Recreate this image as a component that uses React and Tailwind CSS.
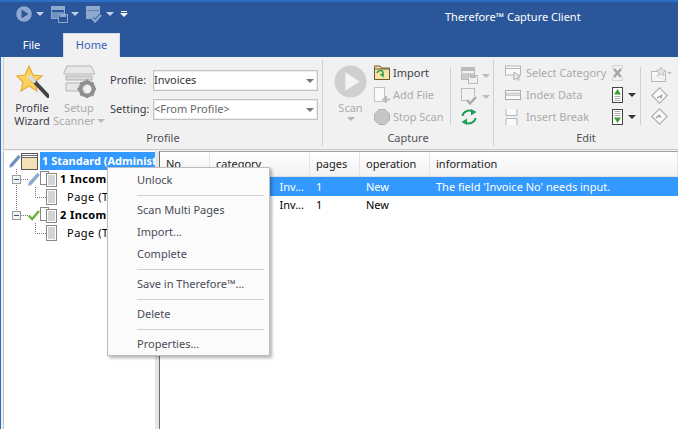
import React from "react";

const Caret = ({ className = "border-t-[#9a9a9a]" }) => (
  <span className={`inline-block w-0 h-0 border-l-[4px] border-r-[4px] border-t-[4px] border-l-transparent border-r-transparent ${className}`} />
);

const PlayCircle = ({ size = 16, fill = "#8fa8d0", tri = "#2b579a" }) => (
  <svg width={size} height={size} viewBox="0 0 32 32">
    <circle cx="16" cy="16" r="15.5" fill={fill} />
    <path d="M11 7 L25 16 L11 25 Z" fill={tri} />
  </svg>
);

const DocSave = ({ c = "#8fa8d0", bg = "#2b579a" }) => (
  <svg width="17" height="17" viewBox="0 0 17 17">
    <rect x="0.5" y="0.5" width="13" height="12" fill="none" stroke={c} />
    <rect x="1" y="1" width="12" height="3" fill={c} />
    <rect x="1" y="6" width="12" height="6" fill={c} opacity="0.7" />
    <rect x="7.5" y="8.5" width="9" height="8" fill={bg} stroke={c} />
    <rect x="9" y="9" width="6" height="2" fill={c} />
  </svg>
);

const DocCheck = ({ c = "#8fa8d0", check = "#8fa8d0", filled = true, bg = "#2b579a" }) => (
  <svg width="17" height="17" viewBox="0 0 17 17">
    <rect x="0.5" y="0.5" width="13" height="12" fill={filled ? c : "none"} stroke={c} />
    <path d="M1 4.5 H13" stroke={bg} opacity="0.5" />
    <path d="M6 12 L9 15.5 L15 9" fill="none" stroke={bg} strokeWidth="4" />
    <path d="M6 12 L9 15.5 L15 9" fill="none" stroke={check} strokeWidth="2.2" />
  </svg>
);

const Wizard = () => (
  <svg width="33" height="33" viewBox="0 0 33 33">
    <path d="M13 1 L17 10 L26 11 L19 17 L21 26 L13 21 L5 26 L7 17 L0.8 11 L9 10 Z" fill="#fbd35c" stroke="#e5a93a" strokeWidth="1.2" />
    <path d="M15 13 L32 31" stroke="#444" strokeWidth="4" strokeLinecap="round" />
    <path d="M14 12 L18 16" stroke="#ddd" strokeWidth="4" strokeLinecap="round" />
  </svg>
);

const ScannerGear = () => (
  <svg width="33" height="33" viewBox="0 0 33 33">
    <path d="M4 1 H28 L32 9 H0.5 Z" fill="#e8e8e8" stroke="#b5b5b5" />
    <rect x="3" y="11" width="26" height="4" fill="#d8d8d8" stroke="#b5b5b5" />
    <path d="M3 18 H22 V26 H3 Z" fill="#e6e6e6" stroke="#b5b5b5" />
    <circle cx="24" cy="24" r="6.5" fill="none" stroke="#8f8f8f" strokeWidth="4" />
    <path d="M24 14.5 V18 M24 30 V33 M14.5 24 H18 M30 24 H33 M17.5 17.5 L20 20 M28 28 L30.5 30.5 M30.5 17.5 L28 20 M20 28 L17.5 30.5" stroke="#8f8f8f" strokeWidth="2.5" />
    <circle cx="24" cy="24" r="3" fill="#f1f1f1" />
  </svg>
);

const ImportIcon = () => (
  <svg width="16" height="16" viewBox="0 0 16 16">
    <path d="M0.5 1 H6 L7.5 3 H15.5 V14.5 H0.5 Z" fill="#f5e3a8" stroke="#6b5a2a" />
    <path d="M1 4 H15" stroke="#6b5a2a" />
    <path d="M3 8 C4 5 8 5 9 7 M9 7 V11 L6.5 9" fill="none" stroke="#1e9a4a" strokeWidth="1.5" />
  </svg>
);

const AddFileIcon = () => (
  <svg width="16" height="16" viewBox="0 0 16 16">
    <rect x="0.5" y="0.5" width="10" height="14" fill="#fafafa" stroke="#c4c4c4" />
    <path d="M12 9 V16 M8 12.5 H16" stroke="#bdbdbd" strokeWidth="2" />
  </svg>
);

const StopIcon = () => (
  <svg width="16" height="16" viewBox="0 0 16 16">
    <path d="M5 0.5 H11 L15.5 5 V11 L11 15.5 H5 L0.5 11 V5 Z" fill="#c6c6c6" stroke="#b0b0b0" />
  </svg>
);

const RefreshIcon = () => (
  <svg width="16" height="16" viewBox="0 0 16 16" fill="none">
    <path d="M1.5 7 C2 3 7 0 11.5 2.5" stroke="#1f9d55" strokeWidth="2" />
    <path d="M10 0 L15.5 3 L10 6.5 Z" fill="#1f9d55" />
    <path d="M14.5 9 C14 13 9 16 4.5 13.5" stroke="#1f9d55" strokeWidth="2" />
    <path d="M6 16 L0.5 13 L6 9.5 Z" fill="#1f9d55" />
  </svg>
);

const SelectCatIcon = () => (
  <svg width="17" height="16" viewBox="0 0 17 16" fill="none">
    <rect x="0.5" y="1" width="15" height="9" stroke="#b5b5b5" fill="#fafafa" />
    <path d="M1 3.5 H15" stroke="#b5b5b5" />
    <path d="M9 7 L9 15 L11 13 L13 15.5 L14 14.5 L12.5 12.5 L15 12 Z" fill="#f1f1f1" stroke="#aaa" />
  </svg>
);

const IndexDataIcon = () => (
  <svg width="17" height="12" viewBox="0 0 17 12" fill="none">
    <rect x="0.5" y="1.5" width="15" height="9" stroke="#aaa" fill="#fafafa" />
    <rect x="1" y="4" width="14" height="2.5" fill="#e0e0e0" stroke="#b5b5b5" strokeWidth="0.6" />
  </svg>
);

const InsertBreakIcon = () => (
  <svg width="13" height="16" viewBox="0 0 13 16" fill="none">
    <path d="M1 0 V6.5 H12 V0 M1 16 V9.5 H12 V16" stroke="#b5b5b5" fill="#fafafa" />
  </svg>
);

const CrossIcon = () => (
  <svg width="11" height="16" viewBox="0 0 11 16" fill="none">
    <path d="M0.5 4 V0.5 H10.5 V4 M0.5 12 V15.5 H10.5 V12" stroke="#d4d4d4" />
    <path d="M2 4 L9 12 M9 4 L2 12" stroke="#a6a6a6" strokeWidth="2.6" />
  </svg>
);

const MoveIcon = ({ up }) => (
  <svg width="11" height="16" viewBox="0 0 11 16">
    <rect x="0.5" y="0.5" width="10" height="15" fill="#fff" stroke="#444" />
    {up ? (
      <>
        <path d="M5.5 2 L9 7.5 H2 Z" fill="#3aa12f" />
        <path d="M2.5 9.5 H8.5 M2.5 11.5 H8.5 M2.5 13.5 H8.5" stroke="#999" strokeWidth="0.8" />
      </>
    ) : (
      <>
        <path d="M2.5 2.5 H8.5 M2.5 4.5 H8.5 M2.5 6.5 H8.5" stroke="#999" strokeWidth="0.8" />
        <path d="M5.5 14 L9 8.5 H2 Z" fill="#3aa12f" />
      </>
    )}
  </svg>
);

const StarDoc = () => (
  <svg width="21" height="16" viewBox="0 0 21 16" fill="none">
    <rect x="0.5" y="4.5" width="14" height="10" stroke="#b8b8b8" fill="#f8f8f8" />
    <path d="M2 13 L6 9 L9 12 L11 10 L14 13" stroke="#ddd" />
    <path d="M10 0 L11.5 3 L15 3.3 L12.4 5.5 L13.2 9 L10 7 L6.8 9 L7.6 5.5 L5 3.3 L8.5 3 Z" fill="#e4e4e4" stroke="#c4c4c4" />
    <path d="M16 5 H21 L18.5 7.5 Z" fill="#c0c0c0" />
  </svg>
);

const Diamond = ({ flip }) => (
  <svg width="17" height="17" viewBox="0 0 17 17" fill="none">
    <g transform={flip ? "translate(0 17) scale(1 -1)" : undefined}>
      <path d="M8.5 0.8 L16.2 8.5 L8.5 16.2 L0.8 8.5 Z" stroke="#b0b0b0" strokeWidth="1.2" fill="#fafafa" />
    </g>
    <path d={flip ? "M5 10 L8 7.5 L10 9.5" : "M6 11 L10.5 8.5 L10 11.5"} stroke="#999" strokeWidth="1.3" />
  </svg>
);

const Combo = ({ children, muted }) => (
  <div className="w-[165px] h-[21px] bg-white border border-[#c4c4c4] shadow-[inset_0_0_0_1px_#ececec] flex items-center justify-between pr-[3px]">
    <span className={muted ? "text-[#666]" : "text-[#333]"}>{children}</span>
    <Caret className="border-t-[#777]" />
  </div>
);

const RowBtn = ({ icon, label, active, iconW = "w-[19px]" }) => (
  <div className="h-[22px] flex items-center">
    <div className={`${iconW} flex justify-start items-center`}>{icon}</div>
    <span className={active ? "text-[#3c3c46]" : "text-[#ababab]"}>{label}</span>
  </div>
);

const Pencil = ({ c = "#6f8fbd" }) => (
  <svg width="12" height="14" viewBox="0 0 12 14">
    <path d="M9.5 1 L11.5 3 L3.5 12.5 L0.5 13.5 L1 10.5 Z" fill={c} stroke="#8fa4c4" strokeWidth="0.5" />
  </svg>
);

const Check = () => (
  <svg width="12" height="12" viewBox="0 0 12 12" fill="none">
    <path d="M0.8 6.5 L4.2 10 L11 2" stroke="#6ab23a" strokeWidth="2.4" />
  </svg>
);

const Stack = () => (
  <svg width="17" height="16" viewBox="0 0 17 16">
    <rect x="0.5" y="0.5" width="8" height="13" fill="#fff" stroke="#888" />
    <rect x="6.5" y="2.5" width="10" height="13" fill="#fff" stroke="#888" />
    <path d="M8 5 H15 M8 7 H15 M8 9 H15 M8 11 H15 M8 13 H15" stroke="#aaa" />
  </svg>
);

const Page = () => (
  <svg width="11" height="16" viewBox="0 0 11 16">
    <rect x="0.5" y="0.5" width="10" height="15" fill="#fff" stroke="#888" />
    <path d="M2 3 H9 M2 5 H9 M2 7 H9 M2 9 H9 M2 11 H9 M2 13 H9" stroke="#aaa" />
  </svg>
);

const Folder = () => (
  <svg width="17" height="17" viewBox="0 0 17 17">
    <rect x="0.5" y="0.5" width="16" height="16" fill="#f3e0b5" stroke="#555" />
    <path d="M1 2.5 H16 M1 4.5 H16" stroke="#666" />
    <rect x="1" y="1" width="15" height="1" fill="#fff" />
    <rect x="1" y="3" width="15" height="1" fill="#fff" />
  </svg>
);

const Minus = () => (
  <span className="w-[9px] h-[9px] border border-[#999] bg-[#f4f4f4] flex items-center justify-center shrink-0">
    <span className="w-[5px] h-px bg-[#2b579a]" />
  </span>
);

// dotted lines of the tree, over the rows
const TreeLines = () => (
  <svg className="absolute left-0 top-0" width="60" height="100" fill="none" stroke="#777" strokeDasharray="1 1">
    <path d="M12.5 18 V65" />
    <path d="M17 28.5 H24" />
    <path d="M17 64.5 H24" />
    <path d="M31.5 36 V46.5 H42" />
    <path d="M31.5 72 V82.5 H42" />
  </svg>
);

const MenuItem = ({ children }) => (
  <div className="h-[22px] flex items-center pl-[29px] text-[#4a4a58]">{children}</div>
);
const MenuSep = () => (
  <div className="h-[8px] flex items-center pl-[29px] pr-[5px]">
    <div className="h-px w-full bg-[#d0d0d0]" />
  </div>
);

const GroupLabel = ({ children }) => (
  <div className="text-center text-[#55505a] h-[16px] leading-[16px] shrink-0">{children}</div>
);

const Columns = [
  ["No", "w-[50px]"],
  ["category", "w-[100px]"],
  ["pages", "w-[50px]"],
  ["operation", "w-[70px]"],
  ["information", "flex-1"],
];

export default function App() {
  return (
    <div className="w-[678px] h-[429px] overflow-hidden relative bg-white flex flex-col text-[11px] font-['Noto_Sans',sans-serif]">
      {/* title bar */}
      <div className="h-[57px] shrink-0 bg-[#2b579a] border-t-2 border-[#2b6fc4] flex flex-col">
        <div className="h-[31px] flex items-start">
          <div className="w-[445px] shrink-0 flex items-center pl-[16px] h-[24px]">
            <PlayCircle />
            <span className="ml-[4px] mr-[7px] flex"><Caret className="border-t-[#c5d2e6]" /></span>
            <DocSave />
            <span className="ml-[3px] mr-[7px] flex"><Caret className="border-t-[#c5d2e6]" /></span>
            <DocCheck />
            <span className="ml-[3px] mr-[6px] flex"><Caret className="border-t-[#c5d2e6]" /></span>
            <span className="flex flex-col items-center gap-[1px]">
              <span className="w-[6px] h-px bg-white" />
              <Caret className="border-t-white" />
            </span>
          </div>
          <div className="mt-[8px] text-white leading-[14px]">Therefore™ Capture Client</div>
        </div>
        <div className="flex h-[24px] items-stretch">
          <div className="w-[63px] flex items-center justify-center text-white">File</div>
          <div className="w-[57px] bg-[#f1f1f1] border border-b-0 border-[#d4dbe8] flex items-center justify-center text-[#3a5fbe]">Home</div>
        </div>
      </div>

      <div className="flex-1 min-h-0 flex flex-col bg-[#f0f0f0] border-l border-[#2b6fc4] pl-[2px]">
        {/* ribbon */}
        <div className="h-[93px] shrink-0 bg-[#f1f1f1] border-l border-[#cfcfcf] border-b border-b-[#c8c8c8] flex overflow-hidden">
          <div className="w-[319px] shrink-0 flex flex-col border-r border-[#d0d0d0] mt-[3px] mb-[3px]">
            <div className="flex-1 min-h-0 flex">
              <div className="w-[38px] ml-[9px] flex flex-col items-center pt-[5px] text-[#3c3c46] leading-[13px]">
                <Wizard />
                <span className="mt-[3px]">Profile</span>
                <span>Wizard</span>
              </div>
              <div className="w-[50px] ml-[3px] flex flex-col items-center pt-[5px] text-[#ababab] leading-[13px]">
                <ScannerGear />
                <span className="mt-[3px]">Setup</span>
                <span className="flex items-center gap-[2px]">Scanner <Caret className="border-t-[#bbb]" /></span>
              </div>
              <div className="ml-[6px] pt-[10px] flex flex-col gap-[8px] text-[#3c3c46]">
                <div className="flex items-center">
                  <span className="w-[43px]">Profile:</span>
                  <Combo>Invoices</Combo>
                </div>
                <div className="flex items-center">
                  <span className="w-[43px]">Setting:</span>
                  <Combo muted>&lt;From Profile&gt;</Combo>
                </div>
              </div>
            </div>
            <GroupLabel>Profile</GroupLabel>
          </div>

          <div className="w-[171px] shrink-0 flex flex-col border-r border-[#d0d0d0] mt-[3px] mb-[3px]">
            <div className="flex-1 min-h-0 flex">
              <div className="w-[51px] flex flex-col items-center pt-[5px] pl-[4px] text-[#ababab] leading-[13px]">
                <PlayCircle size={33} fill="#cfcfcf" tri="#f4f4f4" />
                <span className="mt-[3px]">Scan</span>
                <span className="mt-[3px] flex"><Caret className="border-t-[#b5b5b5]" /></span>
              </div>
              <div className="w-[76px] pt-[2px]">
                <RowBtn active icon={<ImportIcon />} label="Import" />
                <RowBtn icon={<AddFileIcon />} label="Add File" />
                <RowBtn icon={<StopIcon />} label="Stop Scan" />
              </div>
              <div className="w-[43px] mt-[7px] h-[58px] border-l border-[#d0d0d0] pl-[10px] flex flex-col justify-between">
                <div className="flex items-center gap-[4px]"><DocSave c="#bbb" bg="#f1f1f1" /><Caret className="border-t-[#bbb]" /></div>
                <div className="flex items-center gap-[4px]"><DocCheck c="#bbb" check="#a8a8a8" filled={false} bg="#f1f1f1" /><Caret className="border-t-[#bbb]" /></div>
                <RefreshIcon />
              </div>
            </div>
            <GroupLabel>Capture</GroupLabel>
          </div>

          <div className="flex-1 flex flex-col mt-[3px] mb-[3px]">
            <div className="flex-1 min-h-0 flex pl-[11px]">
              <div className="w-[107px] pt-[2px]">
                <RowBtn iconW="w-[21px]" icon={<SelectCatIcon />} label="Select Category" />
                <RowBtn iconW="w-[21px]" icon={<IndexDataIcon />} label="Index Data" />
                <RowBtn iconW="w-[21px]" icon={<InsertBreakIcon />} label="Insert Break" />
              </div>
              <div className="w-[28px] pt-[2px]">
                <div className="h-[22px] flex items-center"><CrossIcon /></div>
                <div className="h-[22px] flex items-center gap-[5px]"><MoveIcon up /><Caret className="border-t-[#333]" /></div>
                <div className="h-[22px] flex items-center gap-[5px]"><MoveIcon /><Caret className="border-t-[#333]" /></div>
              </div>
              <div className="mt-[7px] h-[58px] border-l border-[#d0d0d0] pl-[10px] flex flex-col justify-between">
                <StarDoc />
                <Diamond />
                <Diamond flip />
              </div>
            </div>
            <GroupLabel>Edit</GroupLabel>
          </div>
        </div>

        {/* panes */}
        <div className="flex-1 flex min-h-0 pt-[1px]">
          <div className="w-[152px] bg-white text-black shrink-0 overflow-hidden pt-[1px] border-l border-[#c4c4c4] relative">
            <TreeLines />
            <div className="h-[18px] flex items-center pl-[5px] whitespace-nowrap relative">
              <Pencil />
              <Folder />
              <span className="ml-[2px] flex-1 h-[18px] leading-[18px] bg-[#3399ff] text-white font-bold overflow-hidden pl-[2px]">1 Standard (Administrator)</span>
            </div>
            <div className="h-[18px] flex items-center pl-[8px] whitespace-nowrap relative">
              <Minus />
              <span className="w-[7px]" />
              <Pencil c="#8fa8d0" />
              <Stack />
              <span className="ml-[3px] font-bold tracking-[0.4px]">1 Incoming</span>
            </div>
            <div className="h-[18px] flex items-center pl-[42px] whitespace-nowrap relative">
              <Page />
              <span className="ml-[10px] tracking-[0.5px]">Page (TIFF)</span>
            </div>
            <div className="h-[18px] flex items-center pl-[8px] whitespace-nowrap relative">
              <Minus />
              <span className="w-[7px]" />
              <Check />
              <Stack />
              <span className="ml-[3px] font-bold tracking-[0.4px]">2 Incoming</span>
            </div>
            <div className="h-[18px] flex items-center pl-[42px] whitespace-nowrap relative">
              <Page />
              <span className="ml-[10px] tracking-[0.5px]">Page (TIFF)</span>
            </div>
          </div>
          <div className="w-[4px] shrink-0 bg-[#e6e6e6]" />
          <div className="flex-1 bg-white text-black min-w-0 border-l border-l-[#6e6e6e] border-t border-t-[#a0a0a0]">
            <div className="h-[25px] flex bg-gradient-to-b from-white to-[#f2f2f2] border-b border-[#e0e0e0]">
              {Columns.map(([name, w]) => (
                <div key={name} className={`${w} border-r border-[#e4e4e4] pl-[6px] pt-px flex items-center text-[#222]`}>{name}</div>
              ))}
            </div>
            <div className="h-[19px] flex bg-[#3399ff] text-white items-center pt-px">
              <div className="w-[50px]" />
              <div className="w-[100px] text-right pr-[6px]">Inv...</div>
              <div className="w-[50px] pl-[6px]">1</div>
              <div className="w-[70px] pl-[6px]">New</div>
              <div className="flex-1 pl-[6px]">The field 'Invoice No' needs input.</div>
            </div>
            <div className="h-[19px] flex items-center">
              <div className="w-[50px]" />
              <div className="w-[100px] text-right pr-[6px]">Inv...</div>
              <div className="w-[50px] pl-[6px]">1</div>
              <div className="w-[70px] pl-[6px]">New</div>
            </div>
          </div>
        </div>
      </div>

      {/* context menu */}
      <div className="absolute left-[107px] top-[167px] w-[163px] h-[189px] bg-[#fbfbfb] border border-[#bdbdbd] shadow-[2px_2px_3px_rgba(0,0,0,0.3)] pt-px z-10">
        <MenuItem>Unlock</MenuItem>
        <MenuSep />
        <MenuItem>Scan Multi Pages</MenuItem>
        <MenuItem>Import...</MenuItem>
        <MenuItem>Complete</MenuItem>
        <MenuSep />
        <MenuItem>Save in Therefore™...</MenuItem>
        <MenuSep />
        <MenuItem>Delete</MenuItem>
        <MenuSep />
        <MenuItem>Properties...</MenuItem>
      </div>
    </div>
  );
}
